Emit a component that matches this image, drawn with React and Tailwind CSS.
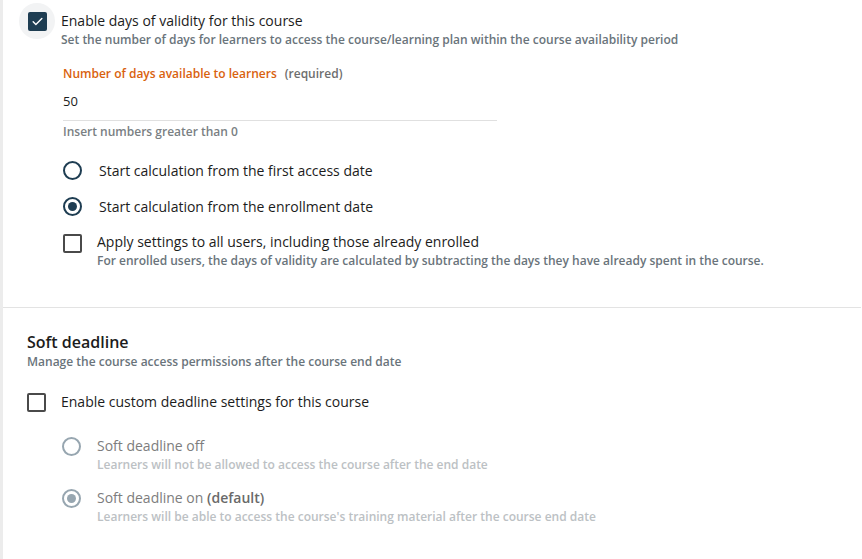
import React from 'react';

// Casilla de verificación simple
const Checkbox = ({ checked }) => (
    <span className={`flex h-[19px] w-[19px] shrink-0 items-center justify-center rounded-[2px] ${checked ? 'bg-[#1e3d52]' : 'border-2 border-[#4a4a4a] bg-white'}`}>
        {checked && (
            <svg width="13" height="13" viewBox="0 0 24 24" fill="none" stroke="white" strokeWidth="2.6" strokeLinecap="round" strokeLinejoin="round">
                <path d="M4 12.5l5 5L20 6.5" />
            </svg>
        )}
    </span>
);

const Radio = ({ checked, disabled }) => (
    <span className={`flex h-[19px] w-[19px] shrink-0 items-center justify-center rounded-full border-2 ${disabled ? 'border-[#97a6b0]' : 'border-[#1e3d52]'}`}>
        {checked && <span className={`h-[9px] w-[9px] rounded-full ${disabled ? 'bg-[#97a6b0]' : 'bg-[#1e3d52]'}`} />}
    </span>
);

const App = () => {
    return (
        <div className="flex h-[559px] w-[862px] overflow-hidden bg-white font-['Open_Sans',sans-serif] text-[#1c1c1c]">
            <div className="w-[3px] shrink-0 bg-[#ececec]" />

            <div className="flex flex-1 flex-col">
                {/* --- Validez en días --- */}
                <div className="pl-[16px] pt-[3px]">
                    <div className="flex items-start">
                        <span className="flex h-[36px] w-[36px] shrink-0 items-center justify-center rounded-full bg-[#f2f3f4]">
                            <Checkbox checked />
                        </span>
                        <div className="ml-[6px] pt-[8px]">
                            <div className="text-[14px] leading-[20px]">Enable days of validity for this course</div>
                            <div className="text-[12px] font-semibold leading-[17px] text-[#6a747b]">
                                Set the number of days for learners to access the course/learning plan within the course availability period
                            </div>
                        </div>
                    </div>

                    <div className="ml-[44px] mt-[18px] w-[434px]">
                        <div className="text-[12px] font-semibold leading-[16px]">
                            <span className="text-[#d9620e]">Number of days available to learners</span>
                            <span className="ml-[8px] text-[#6e6e6e]">(required)</span>
                        </div>
                        <div className="mt-[10px] border-b border-[#e0e0e0] pb-[10px] text-[13px] leading-[18px]">50</div>
                        <div className="mt-[3px] text-[12px] font-semibold leading-[16px] text-[#7a7f83]">Insert numbers greater than 0</div>
                    </div>

                    <div className="ml-[44px] mt-[20px] flex flex-col">
                        <label className="flex h-[20px] items-center gap-[17px]">
                            <Radio />
                            <span className="text-[14px]">Start calculation from the first access date</span>
                        </label>
                        <label className="mt-[16px] flex h-[20px] items-center gap-[17px]">
                            <Radio checked />
                            <span className="text-[14px]">Start calculation from the enrollment date</span>
                        </label>
                        <div className="mt-[16px] flex items-start gap-[15px]">
                            <span className="mt-[2px]"><Checkbox /></span>
                            <div>
                                <div className="text-[14px] leading-[20px]">Apply settings to all users, including those already enrolled</div>
                                <div className="text-[12px] font-semibold leading-[18px] text-[#6a747b]">
                                    For enrolled users, the days of validity are calculated by subtracting the days they have already spent in the course.
                                </div>
                            </div>
                        </div>
                    </div>
                </div>

                <div className="mt-[37px] h-px w-[858px] bg-[#e3e3e3]" />

                {/* --- Soft deadline --- */}
                <div className="pl-[24px] pt-[23px]">
                    <div className="text-[16px] font-semibold leading-[22px]">Soft deadline</div>
                    <div className="mt-[1px] text-[12px] font-semibold leading-[16px] text-[#6a747b]">Manage the course access permissions after the course end date</div>

                    <label className="mt-[22px] flex items-center gap-[15px]">
                        <Checkbox />
                        <span className="text-[14px] leading-[20px]">Enable custom deadline settings for this course</span>
                    </label>

                    <div className="ml-[35px] mt-[24px] flex flex-col">
                        <div className="flex items-start gap-[16px]">
                            <span className="mt-[1px]"><Radio disabled /></span>
                            <div>
                                <div className="text-[14px] leading-[20px] text-[#7d7d7d]">Soft deadline off</div>
                                <div className="text-[12px] font-semibold leading-[18px] text-[#bcc1c4]">Learners will not be allowed to access the course after the end date</div>
                            </div>
                        </div>
                        <div className="mt-[14px] flex items-start gap-[16px]">
                            <span className="mt-[1px]"><Radio checked disabled /></span>
                            <div>
                                <div className="text-[14px] leading-[20px] text-[#7d7d7d]">Soft deadline on <span className="font-semibold text-[#6a6a6a]">(default)</span></div>
                                <div className="text-[12px] font-semibold leading-[18px] text-[#bcc1c4]">Learners will be able to access the course's training material after the course end date</div>
                            </div>
                        </div>
                    </div>
                </div>
            </div>
        </div>
    );
};

export default App;
